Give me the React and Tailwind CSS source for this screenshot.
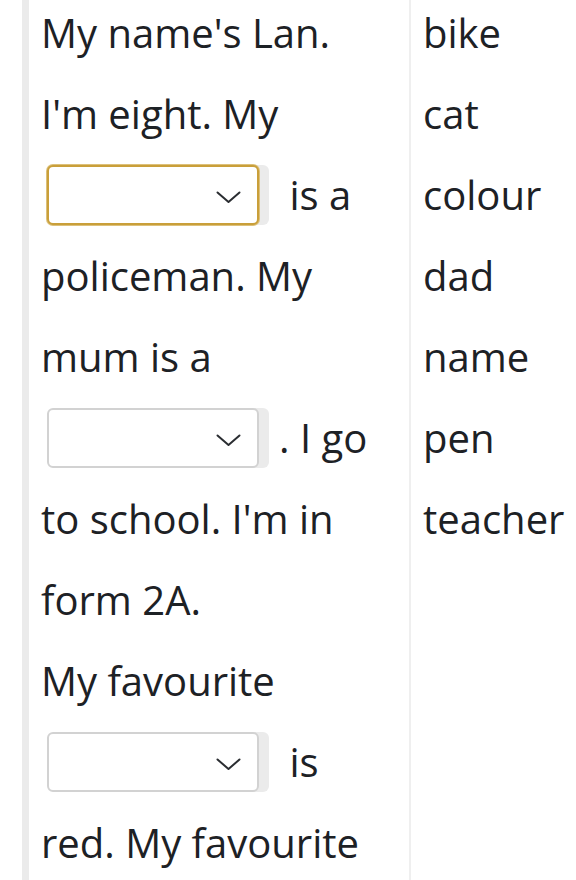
import React from "react";

function Chevron() {
  return (
    <svg width="25" height="13" viewBox="0 0 25 13" fill="none" className="absolute right-[16px] top-[24px]">
      <path d="M1.5 1.5 L12.5 11 L23.5 1.5" stroke="#2a2d31" strokeWidth="2" strokeLinecap="round" strokeLinejoin="round" />
    </svg>
  );
}

function Gap({ focused }) {
  return (
    <span
      className={
        "relative inline-block w-[212px] h-[60px] ml-[6px] mr-[20px] align-[-15px] rounded-[6px] bg-white border-2 shadow-[10px_0_0_#ebebeb] " +
        (focused ? "border-[#c99f3a] ring-1 ring-[#dcc07a]" : "border-[#d2d2d2]")
      }
    >
      <Chevron />
    </span>
  );
}

const words = ["bike", "cat", "colour", "dad", "name", "pen", "teacher"];

export default function App() {
  return (
    <div className="min-h-screen bg-white overflow-hidden font-['Open_Sans',sans-serif] text-[40px] leading-[81px] text-[#1d2125]">
      <div className="flex ml-[22px] -mt-[8px] min-h-[900px]">
        <div className="w-[387px] shrink-0 border-l-[7px] border-[#ebebeb] pl-[12px]">
          My name's Lan.
          <br />
          I'm eight. My
          <br />
          <Gap focused /> is a
          <br />
          policeman. My
          <br />
          mum is a
          <br />
          <Gap />. I go
          <br />
          to school. I'm in
          <br />
          form 2A.
          <br />
          My favourite
          <br />
          <Gap /> is
          <br />
          red. My favourite
        </div>
        <div className="flex-1 border-l-2 border-[#efefef] pl-[12px]">
          {words.map((w) => (
            <div key={w}>{w}</div>
          ))}
        </div>
      </div>
    </div>
  );
}
